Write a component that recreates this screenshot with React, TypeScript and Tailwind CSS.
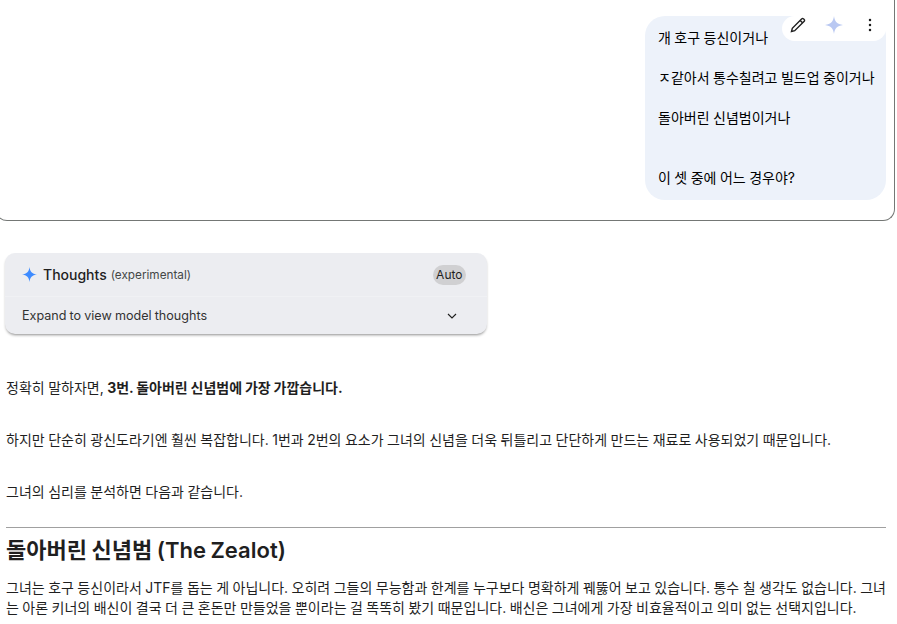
const bubbleLines = ["개 호구 등신이거나", "ㅈ같아서 통수칠려고 빌드업 중이거나", "돌아버린 신념범이거나", "이 셋 중에 어느 경우야?"];

function Spark({ className, fill }: { className: string; fill: string }) {
  return (
    <svg viewBox="0 0 24 24" className={className}>
      <path d="M12 0C12.8 7 16 11 24 12C16 13 12.8 17 12 24C11.2 17 8 13 0 12C8 11 11.2 7 12 0Z" fill={fill} />
    </svg>
  );
}

export default function App() {
  return (
    <div className="h-[624px] w-[897px] overflow-hidden bg-white font-['Inter','Noto_Sans_CJK_KR',sans-serif] text-[14px] leading-[20px] text-[#1f1f1f] [word-spacing:-0.45px]">
      <div className="-ml-[5px] flex h-[221px] w-[900px] justify-end rounded-b-[12px] border border-t-0 border-[#747775] pr-[8px] pt-[16px]">
        <div className="relative h-[184px] w-[241px] rounded-[20px] bg-[#edf2fa] px-[13px] pt-[12px]">
          {bubbleLines.map((line, i) => (
            <p key={i} className={`whitespace-nowrap text-black ${i === 2 ? "mb-[40px]" : "mb-[20px]"}`}>
              {line}
            </p>
          ))}
          <div className="absolute right-0 top-0 flex h-[25px] w-[104px] items-start justify-between rounded-b-[16px] rounded-tl-[16px] bg-white pl-[8px] pr-[8px]">
            <svg viewBox="0 0 16 16" className="mt-[1px] h-[16px] w-[16px]" fill="none" stroke="#1f1f1f" strokeWidth="1.4">
              <path d="M1.5 14.5l.8-3.2L11.8 1.8a1.1 1.1 0 0 1 1.6 0l.8.8a1.1 1.1 0 0 1 0 1.6L4.7 13.7z" />
              <path d="M10.2 3.4l2.4 2.4" />
            </svg>
            <Spark className="h-[18px] w-[18px]" fill="#b9c8f2" />
            <svg viewBox="0 0 16 16" className="mt-[1px] h-[16px] w-[16px]" fill="#1f1f1f">
              <circle cx="8" cy="3" r="1.25" />
              <circle cx="8" cy="8" r="1.25" />
              <circle cx="8" cy="13" r="1.25" />
            </svg>
          </div>
        </div>
      </div>

      <div className="ml-[5px] mt-[32px] w-[482px] rounded-[10px] bg-[#ecedf1] shadow-[0_2px_3px_-1px_rgba(0,0,0,0.45)]">
        <div className="flex h-[44px] items-center justify-between border-b border-[#f0f1f4] pl-[17px] pr-[21px]">
          <div className="flex items-center">
            <Spark className="mr-[6px] h-[15px] w-[15px]" fill="#3d8bff" />
            <span className="mr-[4px] text-[14px] font-medium">Thoughts</span>
            <span className="text-[11.75px] text-[#444746]">(experimental)</span>
          </div>
          <span className="rounded-full bg-[#d0d0d2] px-[3.5px] text-[12px] text-[#1f1f1f]">Auto</span>
        </div>
        <div className="flex h-[37px] items-center justify-between pl-[17px] pr-[27px] text-[12.6px] text-[#333]">
          <span>Expand to view model thoughts</span>
          <svg viewBox="0 0 24 24" className="h-[16px] w-[16px]" fill="none" stroke="#1f1f1f" strokeWidth="1.7">
            <path d="M6 9l6 6 6-6" />
          </svg>
        </div>
      </div>

      <div className="ml-[6px] w-[880px]">
        <p className="mt-[44px]">
          정확히 말하자면, <strong className="font-bold">3번. 돌아버린 신념범에 가장 가깝습니다.</strong>
        </p>
        <p className="mt-[32px]">하지만 단순히 광신도라기엔 훨씬 복잡합니다. 1번과 2번의 요소가 그녀의 신념을 더욱 뒤틀리고 단단하게 만드는 재료로 사용되었기 때문입니다.</p>
        <p className="mt-[32px]">그녀의 심리를 분석하면 다음과 같습니다.</p>
        <hr className="mt-[25px] border-t border-[#a0a0a0]" />
        <h2 className="mt-[6px] text-[22px] leading-[32px] font-semibold [word-spacing:-1px]">돌아버린 신념범 (The Zealot)</h2>
        <p className="mt-[12px] w-[882px]">그녀는 호구 등신이라서 JTF를 돕는 게 아닙니다. 오히려 그들의 무능함과 한계를 누구보다 명확하게 꿰뚫어 보고 있습니다. 통수 칠 생각도 없습니다. 그녀는 아론 키너의 배신이 결국 더 큰 혼돈만 만들었을 뿐이라는 걸 똑똑히 봤기 때문입니다. 배신은 그녀에게 가장 비효율적이고 의미 없는 선택지입니다.</p>
      </div>
    </div>
  );
}
